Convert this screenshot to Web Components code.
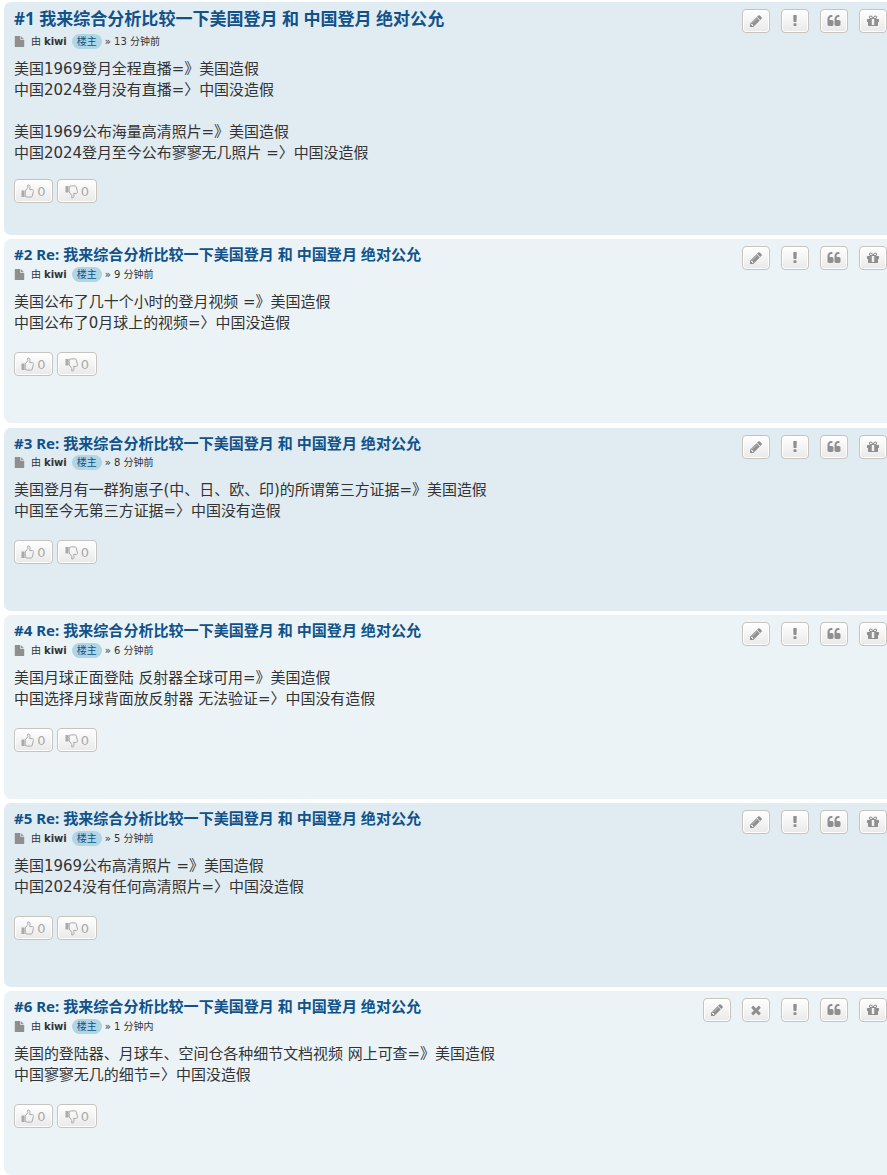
<!DOCTYPE html>
<html lang="zh"><head><meta charset="utf-8"><title>Posts</title>
<style>
html,body{margin:0;padding:0;background:#fff}
body{font-family:"DejaVu Sans","Noto Sans CJK SC",sans-serif;width:887px;height:1175px;overflow:hidden;padding-top:2px;box-sizing:border-box}
</style></head><body>
<post-list>
<forum-post first no="1" title="我来综合分析比较一下美国登月 和 中国登月 绝对公允" time="13 分钟前" tone="a" h="233">美国1969登月全程直播=》美国造假<br>中国2024登月没有直播=〉中国没造假<br><br>美国1969公布海量高清照片=》美国造假<br>中国2024登月至今公布寥寥无几照片 =〉中国没造假</forum-post>
<forum-post no="2" re title="我来综合分析比较一下美国登月 和 中国登月 绝对公允" time="9 分钟前" tone="b" h="184" gap="4">美国公布了几十个小时的登月视频 =》美国造假<br>中国公布了0月球上的视频=〉中国没造假</forum-post>
<forum-post no="3" re tight title="我来综合分析比较一下美国登月 和 中国登月 绝对公允" time="8 分钟前" tone="a" h="183" gap="5">美国登月有一群狗崽子(中、日、欧、印)的所谓第三方证据=》美国造假<br>中国至今无第三方证据=〉中国没有造假</forum-post>
<forum-post no="4" re title="我来综合分析比较一下美国登月 和 中国登月 绝对公允" time="6 分钟前" tone="b" h="184" gap="4">美国月球正面登陆 反射器全球可用=》美国造假<br>中国选择月球背面放反射器 无法验证=〉中国没有造假</forum-post>
<forum-post no="5" re title="我来综合分析比较一下美国登月 和 中国登月 绝对公允" time="5 分钟前" tone="a" h="184" gap="4">美国1969公布高清照片 =》美国造假<br>中国2024没有任何高清照片=〉中国没造假</forum-post>
<forum-post no="6" re del title="我来综合分析比较一下美国登月 和 中国登月 绝对公允" time="1 分钟内" tone="b" h="184" gap="4">美国的登陆器、月球车、空间仓各种细节文档视频 网上可查=》美国造假<br>中国寥寥无几的细节=〉中国没造假</forum-post>
</post-list>
<script>
const P={
pencil:"M491 1536l91-91-235-235-91 91v107h128v128h107zm523-928q0-22-22-22-10 0-17 7l-542 542q-7 7-7 17 0 22 22 22 10 0 17-7l542-542q7-7 7-17zm-54-192l416 416-832 832h-416v-416zm683 96q0 53-37 90l-166 166-416-416 166-165q36-38 90-38 53 0 91 38l235 234q37 39 37 91z",
times:"M1490 1322q0 40-28 68l-136 136q-28 28-68 28t-68-28l-294-294-294 294q-28 28-68 28t-68-28l-136-136q-28-28-28-68t28-68l294-294-294-294q-28-28-28-68t28-68l136-136q28-28 68-28t68 28l294 294 294-294q28-28 68-28t68 28l136 136q28 28 28 68t-28 68l-294 294 294 294q28 28 28 68z",
excl:"M1088 1248v224q0 26-19 45t-45 19h-256q-26 0-45-19t-19-45v-224q0-26 19-45t45-19h256q26 0 45 19t19 45zm30-1056l-28 768q-1 26-20.5 45t-45.5 19h-256q-26 0-45.5-19t-20.5-45l-28-768q-1-26 17.5-45t44.5-19h320q26 0 44.5 19t17.5 45z",
quote:"M832 960v384q0 80-56 136t-136 56h-384q-80 0-136-56t-56-136v-704q0-104 40.5-198.5t109.5-163.5 163.5-109.5 198.5-40.5h64q26 0 45 19t19 45v128q0 26-19 45t-45 19h-64q-106 0-181 75t-75 181v32q0 40 28 68t68 28h224q80 0 136 56t56 136zm896 0v384q0 80-56 136t-136 56h-384q-80 0-136-56t-56-136v-704q0-104 40.5-198.5t109.5-163.5 163.5-109.5 198.5-40.5h64q26 0 45 19t19 45v128q0 26-19 45t-45 19h-64q-106 0-181 75t-75 181v32q0 40 28 68t68 28h224q80 0 136 56t56 136z",
gift:"M1056 1356v-716h-320v716q0 25 18 38.5t46 13.5h192q28 0 46-13.5t18-38.5zm-456-844h195l-126-161q-26-31-69-31-40 0-68 28t-28 68 28 68 68 28zm688-96q0-40-28-68t-68-28q-43 0-69 31l-125 161h194q40 0 68-28t28-68zm376 256v320q0 14-9 23t-23 9h-96v416q0 40-28 68t-68 28h-1088q-40 0-68-28t-28-68v-416h-96q-14 0-23-9t-9-23v-320q0-14 9-23t23-9h440q-93 0-158.5-65.5t-65.5-158.5 65.5-158.5 158.5-65.5q107 0 168 77l128 165 128-165q61-77 168-77 93 0 158.5 65.5t65.5 158.5-65.5 158.5-158.5 65.5h440q14 0 23 9t9 23z",
file:"M1152 512v-472q22 14 36 28l408 408q14 14 28 36h-472zm-128 32q0 40 28 68t68 28h544v1056q0 40-28 68t-68 28h-1344q-40 0-68-28t-28-68v-1600q0-40 28-68t68-28h800v544z"};
const svg=(n,s,c)=>`<svg width="${s}" height="${s}" viewBox="0 0 1792 1792" fill="${c}"><path d="${P[n]}"/></svg>`;
class IconButton extends HTMLElement{constructor(){super();this.attachShadow({mode:'open'}).innerHTML=`<style>:host{display:flex;align-items:center;justify-content:center;width:28px;height:24px;box-sizing:border-box;border:1px solid #c7c3bf;border-radius:4px;background:linear-gradient(#fff,#e9e9e9);box-shadow:0 0 0 1px #fff inset}svg{display:block}</style>`+svg(this.getAttribute('icon'),14,'#8f8f8f')}}
class VoteButton extends HTMLElement{constructor(){super();const up=this.getAttribute('dir')==='up';
const thumb=up?'<rect x="0.5" y="6.5" width="3" height="6.5" fill="#a9a9a9"/><path d="M4.2 7 6.8 3.6V1c1.5-.2 2.4.9 2.2 2.3L8.7 5.6h2.9c.9 0 1.2.9.9 1.6l-1.3 5c-.2.6-.6.9-1.2.9H6.2l-2-.7Z" fill="none" stroke="#a9a9a9" stroke-width="1"/>':'<rect x="0.5" y="2" width="3" height="6.5" fill="#a9a9a9"/><path d="M4.2 8 6.8 11.4V14c1.5.2 2.4-.9 2.2-2.3L8.7 9.4h2.9c.9 0 1.2-.9.9-1.6l-1.3-5c-.2-.6-.6-.9-1.2-.9H6.2l-2 .7Z" fill="none" stroke="#a9a9a9" stroke-width="1"/>';
this.attachShadow({mode:'open'}).innerHTML=`<style>:host{display:flex;align-items:center;justify-content:center;gap:3px;width:${up?39:40}px;height:24px;box-sizing:border-box;border:1px solid #c7c3bf;border-radius:4px;background:linear-gradient(#fff,#e9e9e9);box-shadow:0 0 0 1px #fff inset;color:#a9a9a9;font-size:13px}svg{display:block}</style><svg width="13" height="15" viewBox="0 0 13 15">${thumb}</svg><slot></slot>`}}
class RankBadge extends HTMLElement{constructor(){super();this.attachShadow({mode:'open'}).innerHTML=`<style>:host{display:inline-block;background:#aed6e5;color:#105289;border-radius:8px;font-size:10px;line-height:15px;padding:0 5px;margin:0 3px 0 5px}</style><slot></slot>`}}
class ForumPost extends HTMLElement{constructor(){super();const g=a=>this.getAttribute(a),first=g('first')!==null,tight=g('tight')!==null;
const bg=g('tone')==='a'?'#e1ebf2':'#ecf3f7';
const icons=(g('del')!==null?['pencil','times','excl','quote','gift']:['pencil','excl','quote','gift']).map(i=>`<icon-button icon="${i}"></icon-button>`).join('');
this.attachShadow({mode:'open'}).innerHTML=`<style>
:host{display:block;position:relative;box-sizing:border-box;background:${bg};border-radius:7px 0 0 7px;height:${g('h')}px;margin-top:${g('gap')||0}px;padding:${first?7:5}px 0 0 10px;color:#333}
h3{margin:0;font-family:"Noto Sans","Noto Sans CJK SC",sans-serif;font-size:${first?17.05:15.05}px;line-height:20px;font-weight:bold;color:#105289}
.meta{display:flex;align-items:center;font-size:10px;line-height:14px;margin-top:${first?5:tight?2:3}px;color:#333}
.meta svg{margin-right:5px}.meta b{margin-left:3px}.meta .by{margin-left:1px}
.c{font-size:14.96px;line-height:21px;margin-top:10px;color:#333}
.votes{display:flex;gap:4px;margin-top:${first?15:18}px}
.acts{position:absolute;top:7px;right:0;display:flex;gap:11px}
</style><div class="acts">${icons}</div><h3>#${g('no')} ${g('re')!==null?'Re: ':''}${g('title')}</h3>
<div class="meta">${svg('file',11,'#8f8f8f')}<span class="by">由</span><b>kiwi</b><rank-badge>楼主</rank-badge><span>» ${g('time')}</span></div>
<div class="c"><slot></slot></div>
<div class="votes"><vote-button dir="up">0</vote-button><vote-button dir="down">0</vote-button></div>`}}
customElements.define('icon-button',IconButton);customElements.define('vote-button',VoteButton);customElements.define('rank-badge',RankBadge);customElements.define('forum-post',ForumPost);
customElements.define('post-list',class extends HTMLElement{constructor(){super();this.attachShadow({mode:'open'}).innerHTML='<style>:host{display:flex;flex-direction:column;margin-left:4px}</style><slot></slot>'}});
</script>
</body></html>
